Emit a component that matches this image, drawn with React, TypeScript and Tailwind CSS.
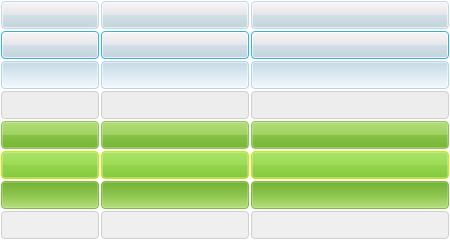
const rows = [
  "border-[#c3d9e6] bg-[linear-gradient(to_bottom,#f6f6f8_0%,#e6e6ea_48%,#d2dfe6_50%,#c2d4dd_100%)] shadow-[inset_0_0_0_1px_rgba(255,255,255,0.6)]",
  "border-[#34b1e6] bg-[linear-gradient(to_bottom,#f6f6f8_0%,#e6e6ea_48%,#d2dfe6_50%,#c2d4dd_100%)] shadow-[inset_0_0_0_1px_rgba(255,255,255,0.7)]",
  "border-[#b4d6e8] bg-[linear-gradient(to_bottom,#c6d9e6_0%,#dce9f2_50%,#f4f9fc_100%)] shadow-[inset_0_0_0_1px_rgba(255,255,255,0.5)]",
  "border-[#cfcfcf] bg-[#ededed]",
  "border-[#8cc65a] bg-[linear-gradient(to_bottom,#b2de78_0%,#a0d263_48%,#86c346_52%,#76b534_100%)] shadow-[inset_0_0_0_1px_rgba(255,255,255,0.25)]",
  "border-[#c6f000] bg-[linear-gradient(to_bottom,#a9e465_0%,#9edc58_48%,#93d44d_52%,#86c940_100%)] shadow-[inset_0_0_0_1px_rgba(255,255,255,0.25)]",
  "border-[#7fbb45] bg-[linear-gradient(to_bottom,#74b236_0%,#8cc44e_50%,#b5e07a_100%)] shadow-[inset_0_0_0_1px_rgba(255,255,255,0.2)]",
  "border-[#cfcfcf] bg-[#efefef]",
];

const widths = ["w-[100px]", "w-[150px]", "w-[200px]"];

export default function App() {
  return (
    <div className="w-[450px] h-[240px] bg-white flex flex-col font-['Liberation_Sans',sans-serif]">
      {rows.map((style, i) => (
        <div key={i} className="flex h-[30px]">
          {widths.map((w) => (
            <div key={w} className={`${w} h-[30px] p-px`}>
              <div className={`h-full w-full rounded-[4px] border ${style}`}></div>
            </div>
          ))}
        </div>
      ))}
    </div>
  );
}
